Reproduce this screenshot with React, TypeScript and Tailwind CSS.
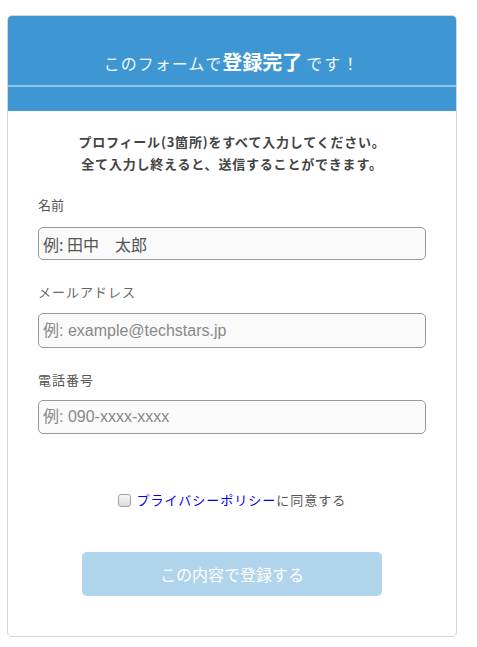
import React from "react";

const font = { fontFamily: '"Noto Sans CJK JP", "Noto Sans", sans-serif' };
const latin = { fontFamily: '"Liberation Sans", "Noto Sans CJK JP", sans-serif' };

export default function App() {
  return (
    <div className="w-[477px] h-[647px] bg-white pt-[15px] pl-[7px]" style={font}>
      <div className="w-[450px] border border-[#d6d6d6] rounded-[5px] overflow-hidden">
        <div className="bg-[#3e97d3] h-[95px] flex flex-col">
          <div className="h-[69px] flex items-end justify-center pb-[10px] text-white">
            <span className="text-[16px] tracking-[1px] text-[#eef6fc]">このフォームで</span>
            <span className="text-[20px] font-bold leading-[26px]">登録完了</span>
            <span className="text-[16px] tracking-[2px] ml-[4px] text-[#eef6fc]">です！</span>
          </div>
          <div className="h-[2px] bg-[#8cc3e8]" />
        </div>
        <div className="px-[30px] pt-[20px] pb-[40px]">
          <div className="text-center text-[13px] font-bold tracking-[0.8px] leading-[22px] text-[#444]">
            <p>プロフィール(3箇所)をすべて入力してください。</p>
            <p>全て入力し終えると、送信することができます。</p>
          </div>
          <div className="mt-[20px] flex flex-col">
            <label className="text-[13px] leading-[20px] text-[#555]">名前</label>
            <div className="mt-[12px] h-[33px] border border-[#999] rounded-[5px] bg-[#fafafa] flex items-center px-[4px] text-[16px] text-[#555]">
              例: 田中　太郎
            </div>
            <label className="mt-[22px] text-[13px] leading-[20px] tracking-[1px] text-[#666]">メールアドレス</label>
            <div className="mt-[11px] h-[35px] border border-[#999] rounded-[5px] bg-[#fafafa] flex items-center px-[4px] text-[16px] text-[#888]" style={latin}>
              例: example@techstars.jp
            </div>
            <label className="mt-[22px] text-[13px] leading-[20px] tracking-[1px] text-[#555]">電話番号</label>
            <div className="mt-[10px] h-[34px] border border-[#999] rounded-[5px] bg-[#fafafa] flex items-center px-[4px] text-[16px] text-[#888]" style={latin}>
              例: 090-xxxx-xxxx
            </div>
          </div>
          <div className="mt-[56px] flex items-center justify-center text-[13px] leading-[20px] tracking-[1px]">
            <span className="w-[13px] h-[13px] border border-[#a0a0a0] rounded-[3px] bg-gradient-to-b from-[#f6f6f6] to-[#dcdcdc] mr-[6px]" />
            <span className="text-[#0000ee]">プライバシーポリシー</span>
            <span className="text-[#555]">に同意する</span>
          </div>
          <div className="mt-[42px] flex justify-center">
            <div className="w-[300px] h-[44px] rounded-[5px] bg-[#b0d4ec] flex items-center justify-center text-white text-[16px]">
              この内容で登録する
            </div>
          </div>
        </div>
      </div>
    </div>
  );
}
